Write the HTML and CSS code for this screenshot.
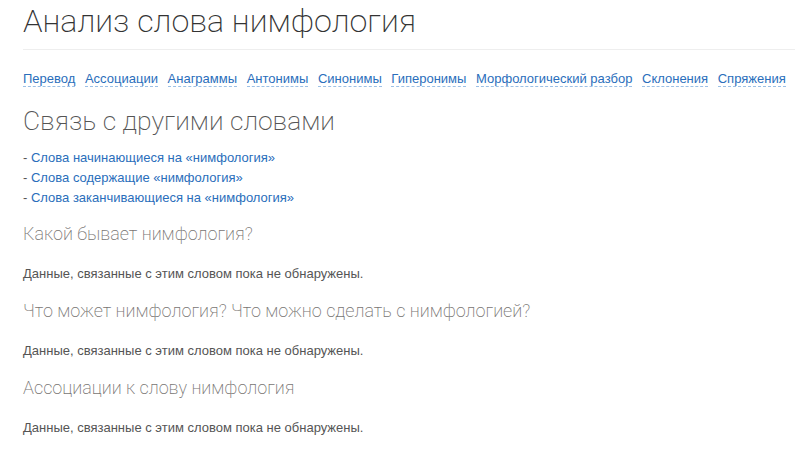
FILE: index.html
```html
<!DOCTYPE html>
<html>
<head>
  <meta charset="utf-8">
  <title>Анализ слова нимфология</title>
  <link rel="stylesheet" href="styles.css">
</head>
<body>
  <div class="page">
    <h1>Анализ слова нимфология</h1>

    <div class="nav">
      <a href="#">Перевод</a>
      <a href="#">Ассоциации</a>
      <a href="#">Анаграммы</a>
      <a href="#">Антонимы</a>
      <a href="#">Синонимы</a>
      <a href="#">Гиперонимы</a>
      <a href="#">Морфологический разбор</a>
      <a href="#">Склонения</a>
      <a href="#">Спряжения</a>
    </div>

    <h2>Связь с другими словами</h2>
    <ul class="links">
      <li>- <a href="#">Слова начинающиеся на «нимфология»</a></li>
      <li>- <a href="#">Слова содержащие «нимфология»</a></li>
      <li>- <a href="#">Слова заканчивающиеся на «нимфология»</a></li>
    </ul>

    <h3>Какой бывает нимфология?</h3>
    <p class="empty">Данные, связанные с этим словом пока не обнаружены.</p>

    <h3>Что может нимфология? Что можно сделать с нимфологией?</h3>
    <p class="empty">Данные, связанные с этим словом пока не обнаружены.</p>

    <h3>Ассоциации к слову нимфология</h3>
    <p class="empty">Данные, связанные с этим словом пока не обнаружены.</p>
  </div>
</body>
</html>
```

FILE: styles.css
```css
body {
  margin: 0;
  font-family: "Liberation Sans", Arial, sans-serif;
  font-size: 13px;
  color: #555;
  background: #fff;
}

.page {
  padding: 0 5px 0 23px;
}

a {
  color: #2a6ebb;
  text-decoration: none;
}

h1 {
  margin: 0;
  padding-top: 3px;
  padding-bottom: 10px;
  font-family: Roboto, "Liberation Sans", sans-serif;
  font-weight: 200;
  font-size: 32.2px;
  line-height: 36px;
  color: #333;
  border-bottom: 1px solid #eee;
}

.nav {
  margin-top: 20px;
  font-size: 13px;
  line-height: 18px;
}

.nav a {
  margin-right: 6px;
  border-bottom: 1px dashed #9cc0e6;
}

h2 {
  margin: 18px 0 12px;
  font-family: Roboto, "Liberation Sans", sans-serif;
  font-weight: 200;
  font-size: 26.4px;
  line-height: 30px;
  color: #555;
}

.links {
  list-style: none;
  margin: 0;
  padding: 0;
  line-height: 20px;
}

h3 {
  margin: 17px 0 20px;
  font-family: Roboto, "Liberation Sans", sans-serif;
  font-weight: 200;
  font-size: 18px;
  line-height: 22px;
  color: #787573;
}

h3:first-of-type {
  margin-top: 15px;
}

.empty {
  margin: 0;
  line-height: 18px;
}
```
